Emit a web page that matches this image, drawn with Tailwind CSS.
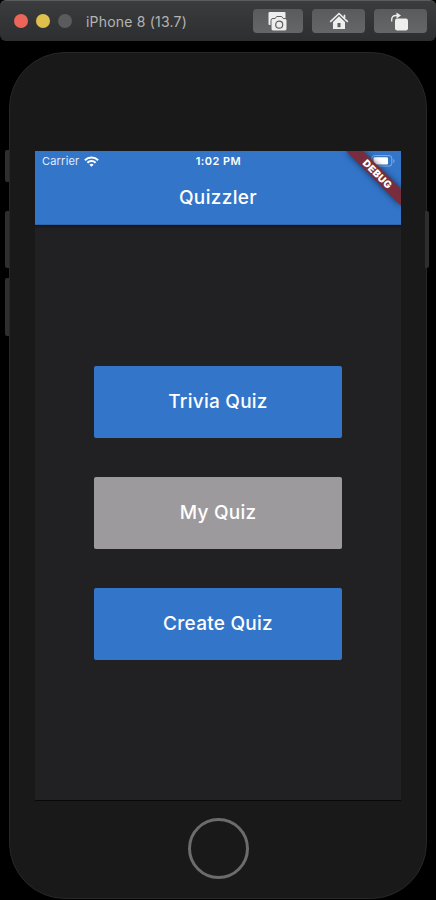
<!DOCTYPE html>
<html lang="en">
<head>
<meta charset="utf-8">
<title>Quizzler</title>
<script src="https://cdn.jsdelivr.net/npm/@tailwindcss/browser@4"></script>
</head>
<body class="bg-black">
<div class="w-[436px] h-[900px] overflow-hidden bg-black font-['Inter',sans-serif] flex flex-col">
  <!-- Simulator window bar -->
  <header class="h-[41px] shrink-0 rounded-md bg-linear-to-b from-[#3b3c3d] to-[#2d2e2f] border-t border-[#5b5c5d] flex items-center pl-[14px] pr-[9px]">
    <div class="flex gap-[8px]">
      <span class="size-[14px] rounded-full bg-[#ec6559]"></span>
      <span class="size-[14px] rounded-full bg-[#e0c04c]"></span>
      <span class="size-[14px] rounded-full bg-[#5a5b5d]"></span>
    </div>
    <h1 class="ml-[14px] pt-px text-[14px] leading-5 tracking-[0.2px] text-[#b4b4b5] whitespace-nowrap">iPhone 8 (13.7)</h1>
    <div class="ml-auto flex gap-[9px]">
      <button class="w-[50px] h-6 rounded-[4px] bg-linear-to-b from-[#5a5b5c] to-[#656667] flex items-center justify-center" aria-label="Screenshot">
        <svg class="w-5 h-5" viewBox="0 0 20 20">
          <rect x=".5" y="1" width="17" height="13" rx="1" fill="#eee"/>
          <path d="M5 7.500h2.200l1.500-2h5l1.500 2h1.800a2 2 0 0 1 2 2V18a2 2 0 0 1-2 2H5a2 2 0 0 1-2-2V9.500a2 2 0 0 1 2-2z" fill="#eee" stroke="#5e5f60" stroke-width="1"/>
          <circle cx="11.200" cy="13.700" r="3.500" fill="#eee" stroke="#5e5f60" stroke-width="1.200"/>
        </svg>
      </button>
      <button class="w-[53px] h-6 rounded-[4px] bg-linear-to-b from-[#5a5b5c] to-[#656667] flex items-center justify-center" aria-label="Home">
        <svg class="w-5 h-5" viewBox="0 0 20 20">
          <path d="M1.200 10.800 10 2.500l8.800 8.300M15.500 7V3.800" fill="none" stroke="#eee" stroke-width="1.600"/>
          <path d="M10 5.200l6 5.700V18H4v-7.100z" fill="#eee"/>
          <path d="M8.500 12h3v4.200h-3z" fill="#5e5f60"/>
        </svg>
      </button>
      <button class="w-[53px] h-6 rounded-[4px] bg-linear-to-b from-[#5a5b5c] to-[#656667] flex items-center justify-center" aria-label="Rotate">
        <svg class="w-5 h-5" viewBox="0 0 20 20">
          <path d="M.7 10.500V8.500q0-4 4.300-4h2" fill="none" stroke="#eee" stroke-width="1.300"/>
          <path d="M5.500 1.500 10 4.500 5.500 7.500z" fill="#eee"/>
          <rect x="4" y="7.500" width="13" height="12" rx="2.200" fill="#eee"/>
        </svg>
      </button>
    </div>
  </header>

  <!-- Device -->
  <div class="relative mt-[11px] ml-[9px] w-[418px] h-[847px] shrink-0">
    <span class="absolute -left-[4px] top-[98px] w-[6px] h-[32px] rounded-l-xs bg-[#2e2e2e]"></span>
    <span class="absolute -left-[4px] top-[159px] w-[6px] h-[57px] rounded-l-xs bg-[#2e2e2e]"></span>
    <span class="absolute -left-[4px] top-[226px] w-[6px] h-[58px] rounded-l-xs bg-[#2e2e2e]"></span>
    <div class="relative w-full h-full rounded-[56px] bg-[#191919] border border-[#272728] pt-[98px] flex flex-col items-center">
      <main class="relative w-[366px] h-[649px] shrink-0 overflow-hidden bg-[#212123] flex flex-col shadow-[0_1px_0_#080808]">
        <div class="relative z-10 h-[74px] shrink-0 bg-[#3375c9] text-white shadow-[0_1px_3px_#0008] border-b border-[#2d65aa]">
          <div class="h-5 px-[7px] pr-[6px] grid grid-cols-3 items-center text-[11px] leading-5">
            <div class="flex items-center gap-[5px] text-[#e4edf8]">
              <span class="tracking-[0.2px]">Carrier</span>
              <svg class="w-[15px] h-[11px]" viewBox="0 0 15 11" fill="none" stroke="#fff" stroke-width="2">
                <path d="M.9 4.200a9.400 9.400 0 0 1 13.200 0M3.400 6.800a5.800 5.800 0 0 1 8.200 0"/>
                <path d="M7.500 10.800 5.400 8.700a3 3 0 0 1 4.200 0z" fill="#fff" stroke="none"/>
              </svg>
            </div>
            <div class="text-center font-semibold tracking-[0.45px] whitespace-nowrap">1:02 PM</div>
            <svg class="justify-self-end w-[24px] h-[12px]" viewBox="0 0 24 12">
              <rect x=".8" y=".6" width="20" height="10.500" rx="2.600" fill="none" stroke="#fff" stroke-opacity=".4"/>
              <rect x="2.500" y="2.300" width="14.500" height="7.200" rx="1.200" fill="#fff"/>
              <path d="M22.300 4v4q1.300-.6 1.300-2t-1.300-2z" fill="#fff" fill-opacity=".4"/>
            </svg>
          </div>
          <h2 class="h-[53px] pt-[2px] flex items-center justify-center text-[19px] font-medium tracking-[0.35px]">Quizzler</h2>
        </div>
        <div class="flex-1 flex flex-col items-center gap-[39px] pt-[140.5px] text-white text-[19px] tracking-[0.25px] font-medium">
          <button class="w-[248px] h-[72px] pt-[2px] rounded-xs bg-[#3375c9]">Trivia Quiz</button>
          <button class="w-[248px] h-[72px] pt-[2px] rounded-xs bg-[#9d9a9d]">My Quiz</button>
          <button class="w-[248px] h-[72px] pt-[2px] rounded-xs bg-[#3375c9]">Create Quiz</button>
        </div>
        <svg class="absolute z-20 right-0 top-0 w-[70px] h-[74px]" viewBox="0 0 70 74">
          <path d="M15 0H32L70 38V55z" fill="#782d3e" class="drop-shadow-[0_0_3px_#0009]"/>
          <text transform="translate(46.300 23) rotate(45)" x="0" y="3.600" text-anchor="middle" fill="#fff" font-family="Inter, sans-serif" font-size="10" font-weight="900" textLength="36">DEBUG</text>
        </svg>
      </main>
      <div class="mt-[18px] size-[61px] rounded-full border-[3px] border-[#6c6c6c]"></div>
    </div>
    <span class="absolute -right-[2px] top-[159px] w-[4px] h-[57px] rounded-r-xs bg-[#2e2e2e]"></span>
  </div>
</div>
</body>
</html>
